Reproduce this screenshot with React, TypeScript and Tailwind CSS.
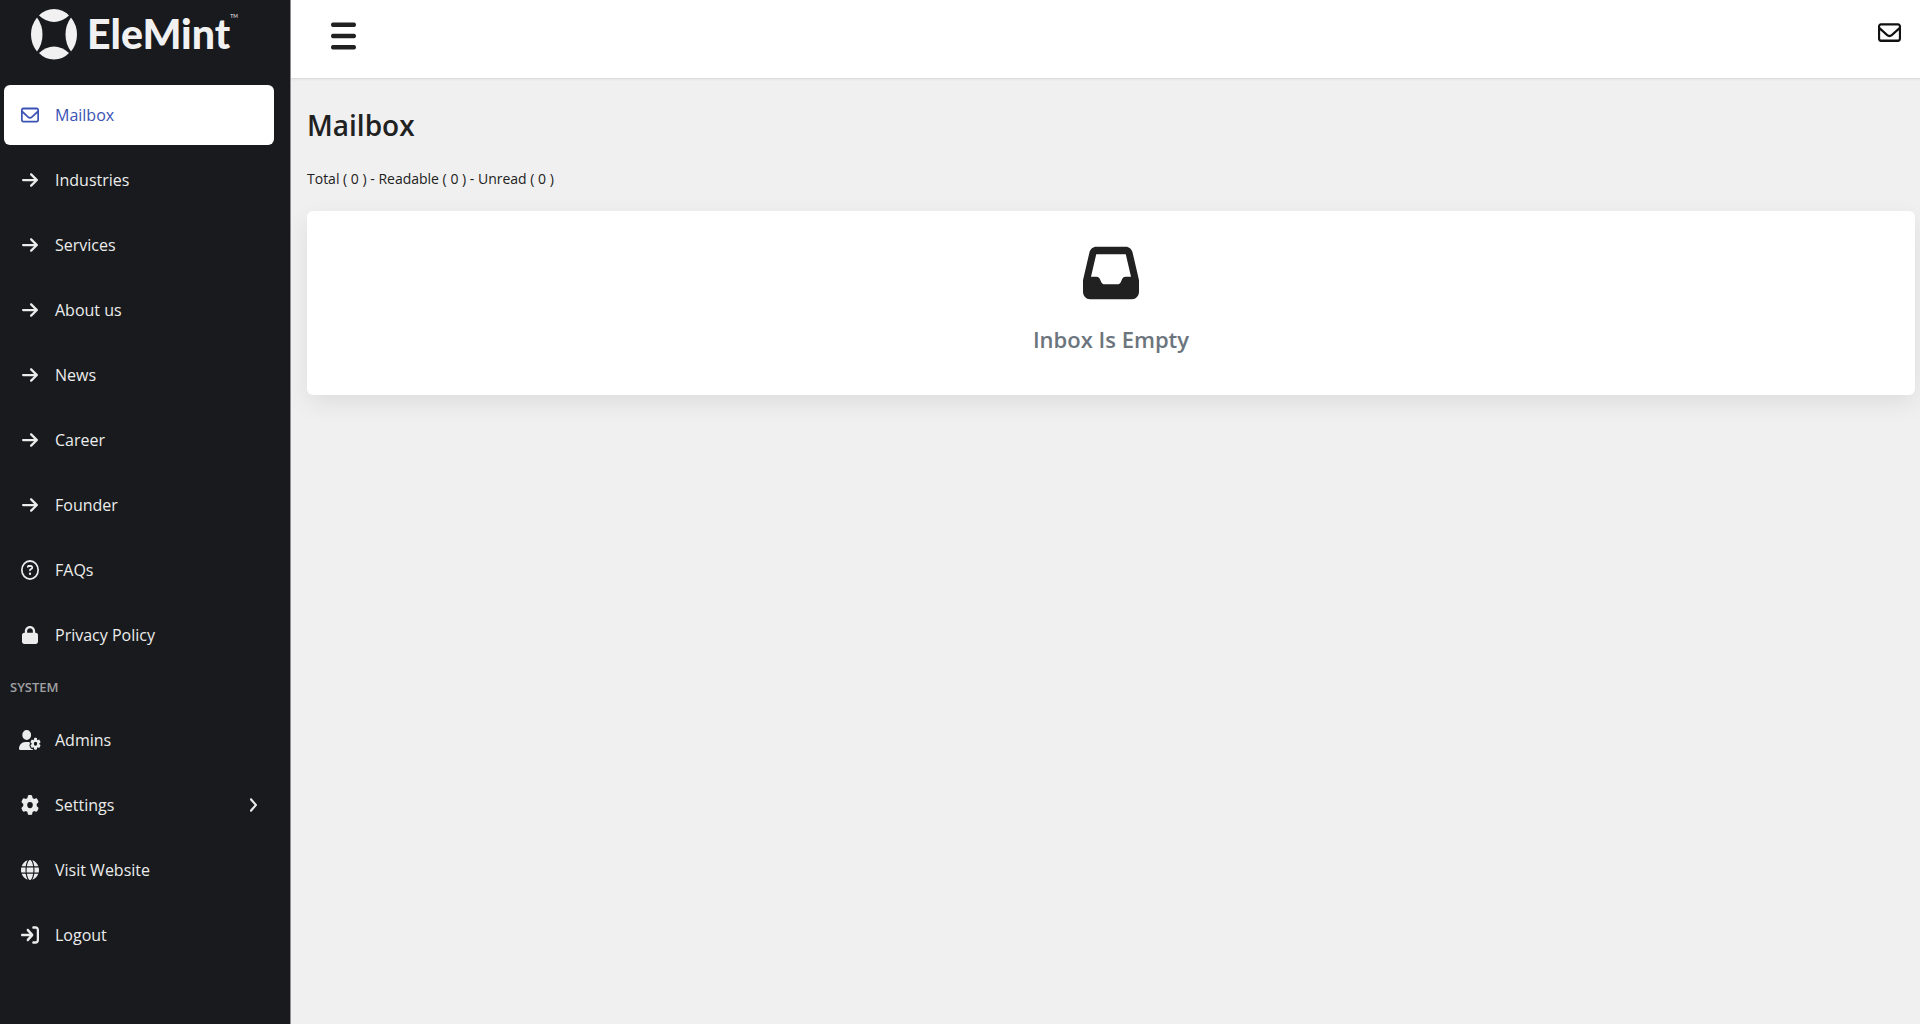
import React from 'react';
import { IconType } from 'react-icons';
import {
  FaAngleRight,
  FaArrowRight,
  FaArrowRightToBracket,
  FaBars,
  FaGear,
  FaGlobe,
  FaInbox,
  FaLock,
  FaRegCircleQuestion,
  FaRegEnvelope,
  FaUserGear,
} from 'react-icons/fa6';

interface NavItem {
  label: string;
  icon: IconType;
  iconClass?: string;
  active?: boolean;
  hasChildren?: boolean;
}

const mainItems: NavItem[] = [
  { label: 'Mailbox', icon: FaRegEnvelope, active: true },
  { label: 'Industries', icon: FaArrowRight, iconClass: 'w-4 h-[18px]' },
  { label: 'Services', icon: FaArrowRight, iconClass: 'w-4 h-[18px]' },
  { label: 'About us', icon: FaArrowRight, iconClass: 'w-4 h-[18px]' },
  { label: 'News', icon: FaArrowRight, iconClass: 'w-4 h-[18px]' },
  { label: 'Career', icon: FaArrowRight, iconClass: 'w-4 h-[18px]' },
  { label: 'Founder', icon: FaArrowRight, iconClass: 'w-4 h-[18px]' },
  { label: 'FAQs', icon: FaRegCircleQuestion },
  { label: 'Privacy Policy', icon: FaLock, iconClass: 'w-4 h-[18px]' },
];

const systemItems: NavItem[] = [
  { label: 'Admins', icon: FaUserGear, iconClass: 'w-[22px] h-5' },
  { label: 'Settings', icon: FaGear, hasChildren: true },
  { label: 'Visit Website', icon: FaGlobe },
  { label: 'Logout', icon: FaArrowRightToBracket },
];

const Logo: React.FC = () => (
  <a href="#" className="flex h-[80px] items-start gap-[10px] pl-[31px] pt-2 text-[#f1f1f1]">
    <svg viewBox="0 0 46 52" className="h-[52px] w-[46px] shrink-0" fill="currentColor" aria-hidden="true">
      <path d="M8 7.500Q14 1 23 1T38 7.500Q31 14 23 14T8 7.500Z" />
      <path d="M8 45Q15 38.500 23 38.500T38 45Q32 51.500 23 51.500T8 45Z" />
      <path d="M6 9.500Q0 17 0 26.500T6 43.500Q11.500 36 11.500 26.500T6 9.500Z" />
      <path d="M40 9.500Q46 17 46 26.500T40 43.500Q34.500 36 34.500 26.500T40 9.500Z" />
    </svg>
    <span className="flex items-start font-['Lato',sans-serif]">
      <span className="text-[41px] font-black leading-[52px]">EleMint</span>
      <span className="pt-1 text-[5px] leading-[8px]">TM</span>
    </span>
  </a>
);

const NavLink: React.FC<{ item: NavItem }> = ({ item }) => {
  const Icon = item.icon;

  return (
    <li>
      <a
        href="#"
        className={`flex h-[60px] items-center rounded-md pl-[17px] pr-4 text-base ${
          item.active ? 'bg-white text-[#3a53b4]' : 'text-[#ececec]'
        }`}
      >
        <span className="mr-4 flex w-[18px] shrink-0 items-center justify-center">
          <Icon
            preserveAspectRatio="none"
            className={`shrink-0 ${item.iconClass || 'w-[18px] h-5'}`}
          />
        </span>
        <span className="grow">{item.label}</span>
        {item.hasChildren && <FaAngleRight preserveAspectRatio="none" className="h-[18px] w-[10px]" />}
      </a>
    </li>
  );
};

const Sidebar: React.FC = () => (
  <aside className="w-[291px] shrink-0 border-r border-[#8f8f91] bg-[#181a1d]">
    <Logo />
    <nav className="pl-1 pr-4 pt-[5px]">
      <ul className="flex flex-col gap-[5px]">
        {mainItems.map((item) => (
          <NavLink key={item.label} item={item} />
        ))}
      </ul>
      <h2 className="py-3 pl-1.5 text-[13px] font-semibold leading-[21px] text-[#a0a1a2]">SYSTEM</h2>
      <ul className="flex flex-col gap-[5px]">
        {systemItems.map((item) => (
          <NavLink key={item.label} item={item} />
        ))}
      </ul>
    </nav>
  </aside>
);

const TopBar: React.FC = () => (
  <header className="flex h-[79px] items-start justify-between border-b border-[#dcdcdc] bg-white pl-10 pr-[19px] shadow-xs">
    <button type="button" aria-label="Toggle menu" className="mt-[18px] text-[#212121]">
      <FaBars preserveAspectRatio="none" className="h-9 w-[25px]" />
    </button>
    <a href="#" aria-label="Messages" className="mt-5 text-[#111]">
      <FaRegEnvelope preserveAspectRatio="none" className="h-[25px] w-[23px]" />
    </a>
  </header>
);

export default function App() {
  return (
    <div className="flex min-h-screen bg-[#f0f0f0] font-['Open_Sans','Noto_Sans',sans-serif] text-[#212121]">
      <Sidebar />
      <div className="min-w-0 grow">
        <TopBar />
        <main className="pl-4 pr-[5px] pt-6">
          <h1 className="text-[28px] font-semibold leading-[44px]">Mailbox</h1>
          <p className="mt-5 text-sm leading-6">Total ( 0 ) - Readable ( 0 ) - Unread ( 0 )</p>
          <section className="mt-5 flex flex-col items-center rounded-md bg-white pb-9 pt-8 shadow-[0_8px_24px_rgba(0,0,0,0.08)]">
            <FaInbox preserveAspectRatio="none" className="h-[60px] w-14" />
            <h2 className="mt-4 text-[22px] font-semibold leading-10 text-[#6c757d]">Inbox Is Empty</h2>
          </section>
        </main>
      </div>
    </div>
  );
}
